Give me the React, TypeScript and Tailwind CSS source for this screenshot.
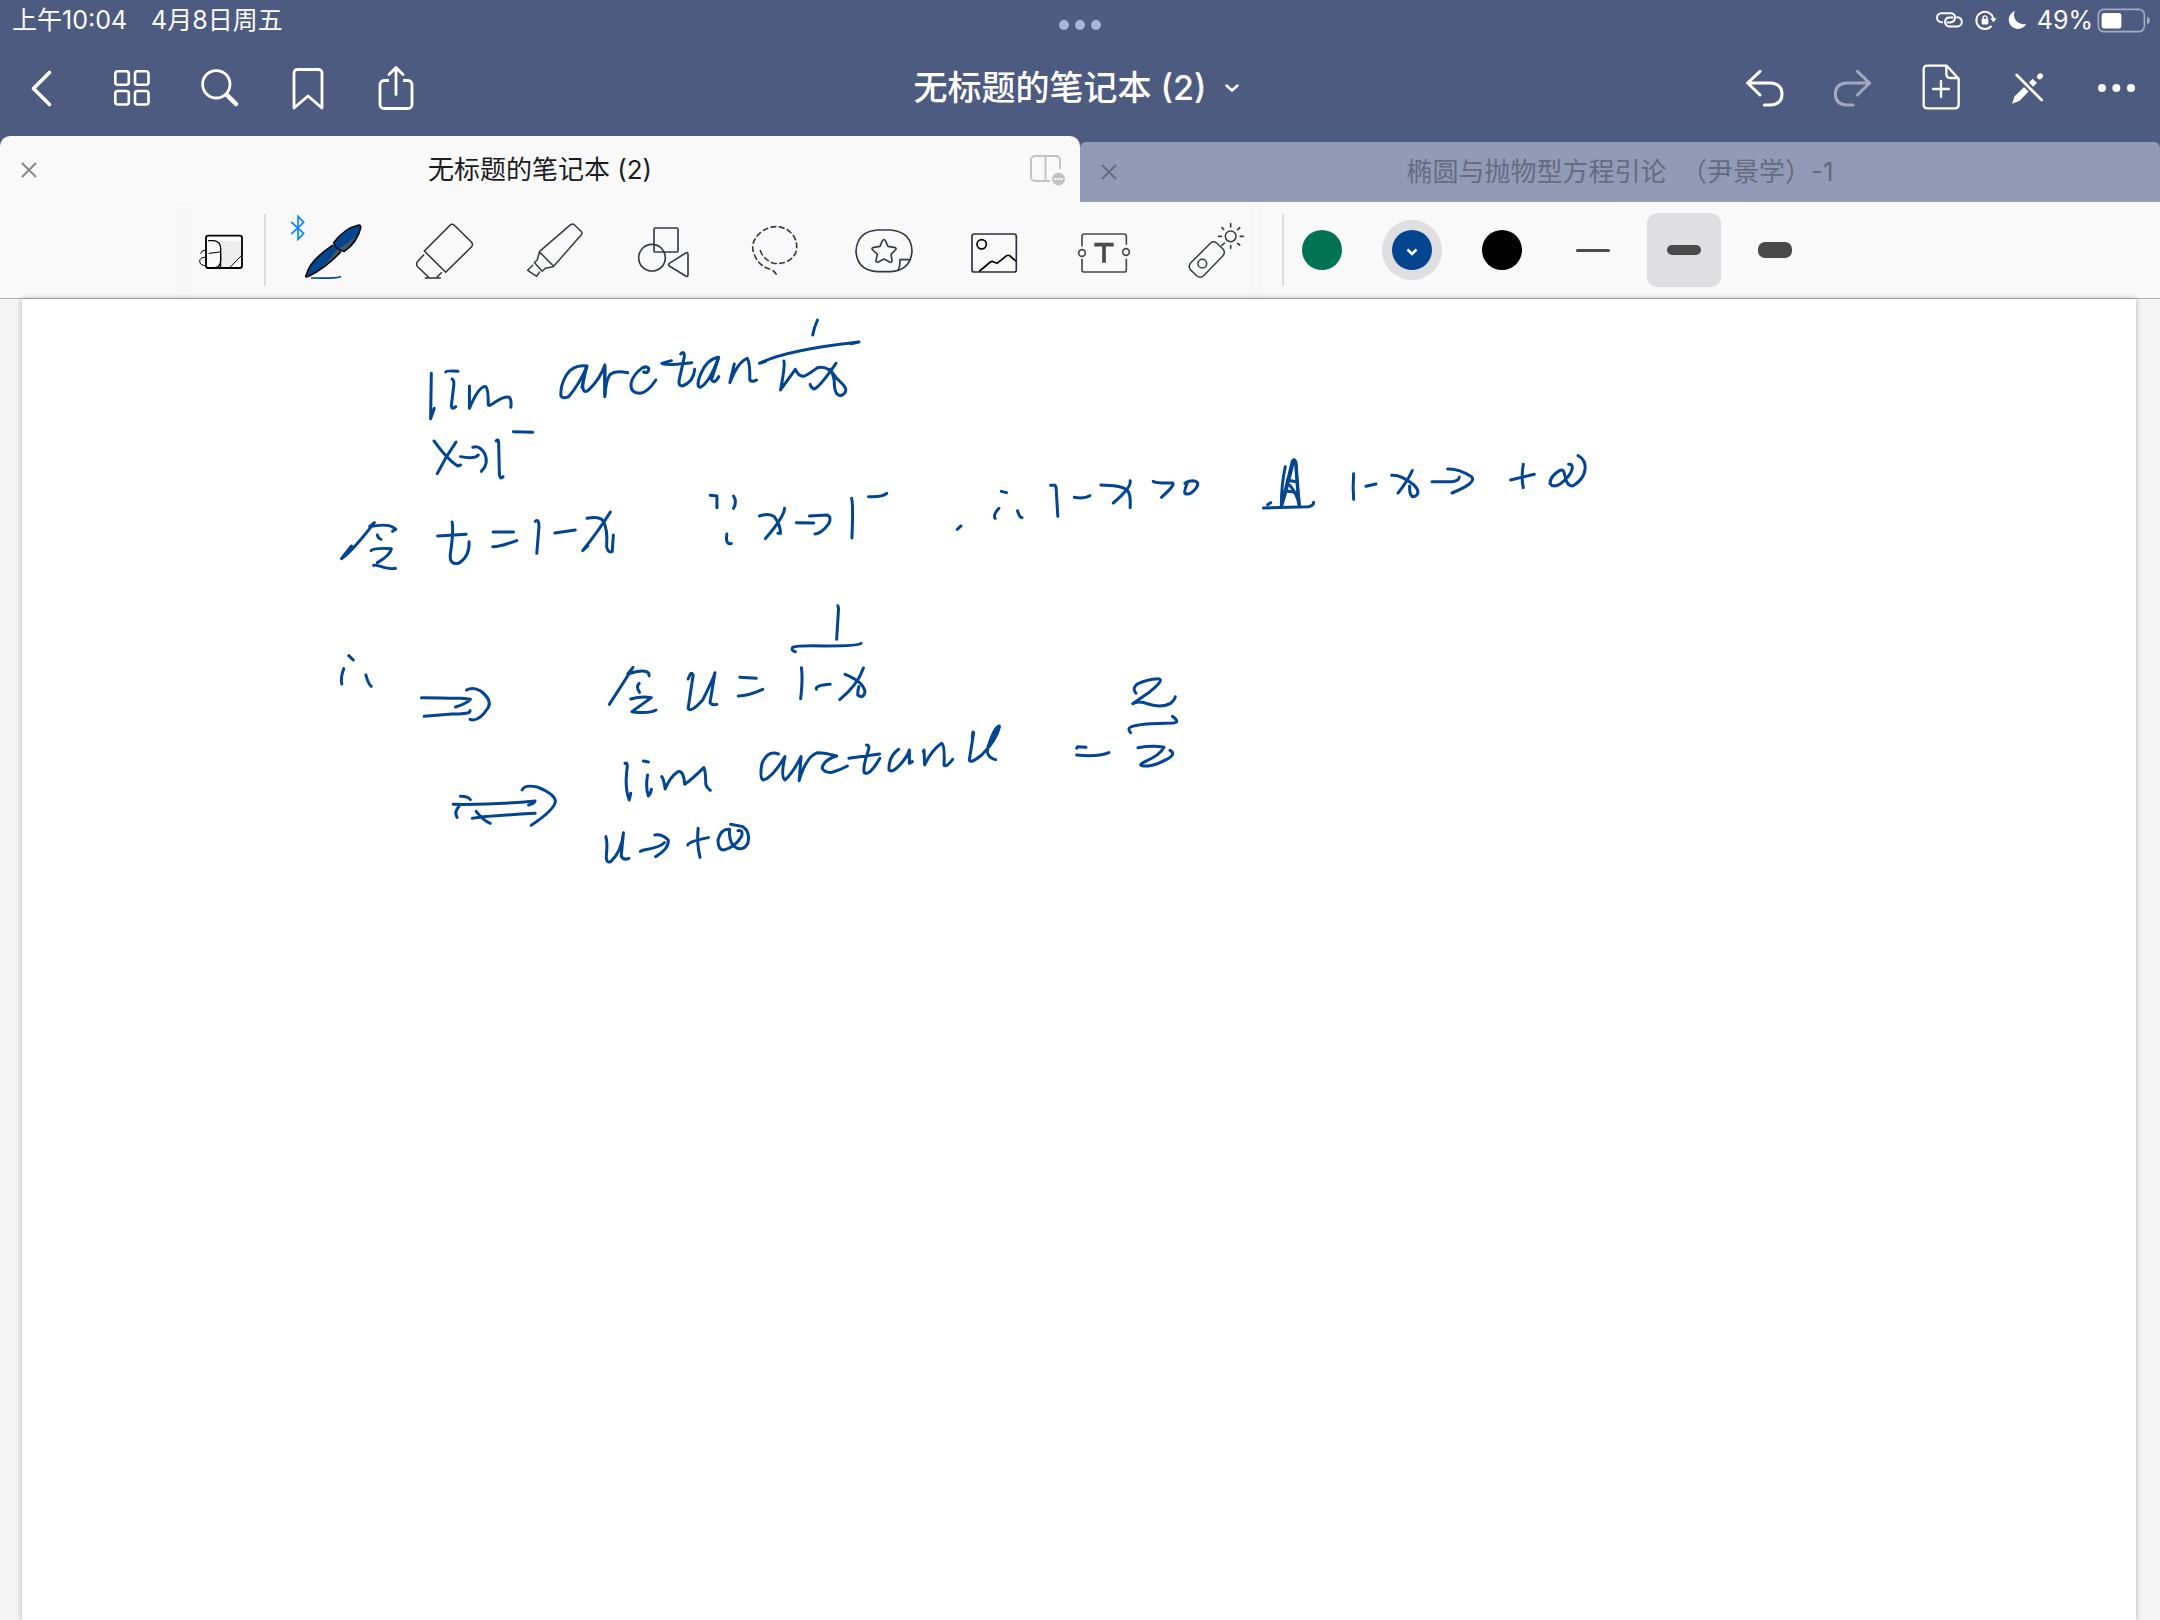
import type { ReactNode } from "react";

const INK = "#03458f";

function NavButton({ label, children }: { label: string; children: ReactNode }) {
  return (
    <button type="button" aria-label={label} className="flex h-22 w-22 items-center justify-center text-white">
      {children}
    </button>
  );
}

function NavIcon({ viewBox = "0 0 44 44", stroke = 3, children }: { viewBox?: string; stroke?: number; children: ReactNode }) {
  return (
    <svg
      viewBox={viewBox}
      className="size-11 overflow-visible"
      fill="none"
      stroke="currentColor"
      strokeWidth={stroke}
      strokeLinecap="round"
      strokeLinejoin="round"
    >
      {children}
    </svg>
  );
}

function Tool({ label, x, stroke = 5, color = "#373b45", children }: { label: string; x: number; stroke?: number; color?: string; children: ReactNode }) {
  return (
    <button type="button" aria-label={label} className="w-[74px] shrink-0">
      <svg
        viewBox={`${x} 42 222 216`}
        className="h-[72px] w-[74px] overflow-visible"
        fill="none"
        stroke={color}
        strokeWidth={stroke}
        strokeLinecap="round"
        strokeLinejoin="round"
      >
        {children}
      </svg>
    </button>
  );
}

function CloseIcon() {
  return (
    <svg viewBox="0 0 16 16" className="size-4" fill="none" stroke="currentColor" strokeWidth="2">
      <path d="M1 1 15 15M15 1 1 15" />
    </svg>
  );
}

function StatusBar() {
  return (
    <div className="grid h-11 grid-cols-[1fr_auto_1fr] items-start text-[25px] leading-10 text-white">
      <div className="flex gap-6 pl-3">
        <span>上午10:04</span>
        <span>4月8日周五</span>
      </div>
      <button type="button" aria-label="多任务" className="flex gap-[6px] pt-5">
        <span className="size-[10px] rounded-full bg-[#a9b4dc]" />
        <span className="size-[10px] rounded-full bg-[#a9b4dc]" />
        <span className="size-[10px] rounded-full bg-[#a9b4dc]" />
      </button>
      <div className="flex h-10 items-center justify-end pr-[9px]">
        <svg viewBox="705 22 96 76" className="h-[25px] w-8" fill="none" stroke="currentColor" strokeWidth="6" strokeLinecap="round">
          <path d="M729 65h-2a13 13 0 0 1 0-27h28a13 13 0 0 1 11 21q-4 7-13 7h-8" />
          <path d="M775 50a14 14 0 0 1 0 28h-24a13 13 0 0 1-13-14q1-13 14-13h9" />
        </svg>
        <svg viewBox="824 22 69 76" className="ml-2 h-[25px] w-[23px]" fill="none" stroke="currentColor" strokeWidth="6">
          <path d="M877 76a26 26 0 1 1 5-22" />
          <path d="M873 53h19l-9 12z" fill="currentColor" stroke="none" />
          <rect x="847" y="55" width="20" height="17" rx="3" fill="currentColor" stroke="none" />
          <path d="M851 57v-5a6 6 0 0 1 12 0v5" strokeWidth="4" />
        </svg>
        <svg viewBox="924 22 60 76" className="ml-[10px] h-[25px] w-5" fill="currentColor">
          <path d="M948 31A28 28 0 1 0 982 70 28 28 0 0 1 948 31z" />
        </svg>
        <span className="ml-[10px]">49%</span>
        <svg viewBox="1190 22 162 76" className="ml-1 h-[25px] w-[54px]" fill="none">
          <rect x="1193" y="26" width="140" height="68" rx="17" stroke="#a2aac0" strokeWidth="5" />
          <rect x="1203" y="37" width="60" height="47" rx="8" fill="#fff" />
          <path d="M1341 48q9 4 9 12t-9 12z" fill="#a2aac0" />
        </svg>
      </div>
    </div>
  );
}

function NavBar() {
  return (
    <nav className="grid h-22 grid-cols-[1fr_auto_1fr] items-center">
      <div className="flex">
        <NavButton label="返回">
          <NavIcon stroke={3.6}>
            <path d="M27.500 6.500 11.500 22.500 27.500 38.500" />
          </NavIcon>
        </NavButton>
        <NavButton label="缩略图">
          <NavIcon stroke={2.6}>
            <rect x="5.300" y="5.300" width="13.500" height="13.500" rx="2.500" />
            <rect x="25" y="5.300" width="13.500" height="13.500" rx="2.500" />
            <rect x="5.300" y="25" width="13.500" height="13.500" rx="2.500" />
            <rect x="25" y="25" width="13.500" height="13.500" rx="2.500" />
          </NavIcon>
        </NavButton>
        <NavButton label="搜索">
          <NavIcon stroke={2.8}>
            <circle cx="18.300" cy="18.300" r="13.700" />
            <path d="M29 29 38 38" strokeWidth="4.500" />
          </NavIcon>
        </NavButton>
        <NavButton label="书签">
          <NavIcon stroke={2.8}>
            <path d="M8 42V7a3.500 3.500 0 0 1 3.500-3.500h21A3.500 3.500 0 0 1 36 7v35L22 30z" />
          </NavIcon>
        </NavButton>
        <NavButton label="分享">
          <NavIcon stroke={2.8}>
            <path d="M15 14.500h-5a4 4 0 0 0-4 4v20a4 4 0 0 0 4 4h24a4 4 0 0 0 4-4v-20a4 4 0 0 0-4-4h-5" strokeLinecap="butt" />
            <path d="M22 2v26.500M15 8.500 22 1.500 29 8.500" />
          </NavIcon>
        </NavButton>
      </div>
      <button type="button" className="flex items-center gap-[18px] pr-2 whitespace-nowrap text-white">
        <h1 className="text-[34px] leading-[44px] font-medium">无标题的笔记本 (2)</h1>
        <svg viewBox="0 0 14 8" className="h-2 w-[14px]" fill="none" stroke="currentColor" strokeWidth="2.500" strokeLinecap="round" strokeLinejoin="round">
          <path d="M1.500 1.500 7 6.500 12.500 1.500" />
        </svg>
      </button>
      <div className="flex justify-end">
        <NavButton label="撤销">
          <NavIcon viewBox="126 198 132 132" stroke={9}>
            <path d="M180 214 143 249 180 285M143 249H211q35 2 35 33t-35 33H193" />
          </NavIcon>
        </NavButton>
        <NavButton label="重做">
          <NavIcon viewBox="390 198 132 132" stroke={9}>
            <g className="text-[#a2aac0]" stroke="currentColor">
              <path d="M472 214 509 249 472 285M509 249H441q-35 2-35 33t35 33H459" />
            </g>
          </NavIcon>
        </NavButton>
        <NavButton label="添加页面">
          <NavIcon viewBox="654 198 132 132" stroke={7}>
            <path d="M681 197h59l36 39v79a10 10 0 0 1-10 10h-85a10 10 0 0 1-10-10V207a10 10 0 0 1 10-10z" />
            <path d="M739 199v24q0 11 11 11h24M723 243v48M699 267h48" />
          </NavIcon>
        </NavButton>
        <NavButton label="只读模式">
          <NavIcon viewBox="918 198 132 132" stroke={8}>
            <path d="M936 311 944 289 998 236 1011 249 958 303z" fill="currentColor" stroke="none" />
            <path d="M1019 230 1021 228" strokeWidth="16" />
            <path d="M955 230 1025 300" stroke="#4d5b80" strokeWidth="20" strokeLinecap="butt" />
            <path d="M950 225 1025 300" />
          </NavIcon>
        </NavButton>
        <NavButton label="更多">
          <NavIcon viewBox="1182 198 132 132">
            <g fill="currentColor" stroke="none">
              <circle cx="1206" cy="264" r="12" />
              <circle cx="1249" cy="264" r="12" />
              <circle cx="1293" cy="264" r="12" />
            </g>
          </NavIcon>
        </NavButton>
      </div>
    </nav>
  );
}

function Tabs() {
  return (
    <div className="mt-1 grid grid-cols-2 items-end text-[26px] leading-8">
      <div className="grid h-[66px] grid-cols-[60px_1fr_60px] items-center rounded-t-[10px] bg-[#f9f9f9] pt-[2px] text-[#1c1c1e]">
        <button type="button" aria-label="关闭标签页" className="flex h-11 items-center pl-[21px] text-[#888]">
          <CloseIcon />
        </button>
        <button type="button" className="truncate text-center">无标题的笔记本 (2)</button>
        <button type="button" aria-label="分屏" className="flex justify-end pr-[14px]">
          <svg viewBox="0 0 36 32" className="h-8 w-9" fill="none" stroke="#c3c3c5" strokeWidth="2">
            <path d="M30 15V6a4 4 0 0 0-4-4H5a4 4 0 0 0-4 4v17a4 4 0 0 0 4 4h15M15.500 2v25" />
            <circle cx="28.500" cy="25" r="6.500" fill="#c3c3c5" stroke="none" />
            <path d="M24.500 25h2M27.500 25h2M30.500 25h2" stroke="#fff" />
          </svg>
        </button>
      </div>
      <div className="grid h-[60px] grid-cols-[60px_1fr_60px] items-center rounded-t-md bg-[#929bb5] text-[#646c80]">
        <button type="button" aria-label="关闭标签页" className="flex h-11 items-center pl-[21px]">
          <CloseIcon />
        </button>
        <button type="button" className="truncate text-center">椭圆与抛物型方程引论{"\u00a0\u00a0"}（尹景学）-1</button>
      </div>
    </div>
  );
}

function Toolbar() {
  return (
    <div role="toolbar" className="flex h-[97px] items-center overflow-hidden border-b border-[#b0b0b0] bg-[#f9f9f9] pl-[176px]">
      <div className="h-full w-4 shrink-0 bg-[#f7f7f7]" />
      <button type="button" aria-label="手势" className="w-[60px] shrink-0">
        <svg viewBox="36 42 180 216" className="h-[72px] w-[60px]" fill="none" stroke="#000" strokeWidth="4" strokeLinecap="round">
          <path d="M121 123h52q11 3 11 14v28L148 203H121z" fill="#ededee" stroke="none" />
          <rect x="78" y="107" width="108" height="97" rx="7" strokeWidth="5.500" />
          <path d="M86 122h16q20 3 20 24v35q0 22-18 22H82" />
          <path d="M87 160 120 156M122 160v42M77 150q-13 0-15 10M77 172q-18-1-18 12 0 12 18 13M150 202 184 167" strokeWidth="3" />
        </svg>
      </button>
      <div className="ml-3 h-[72px] w-[2px] shrink-0 bg-[#dcdcdd]" />

      <div className="ml-[31px] flex shrink-0 gap-9">
        <Tool label="钢笔" x={351}>
          <path d="M335 67 371 100 354 118V49L371 67 335 101" stroke="#0a84ff" strokeWidth="5" strokeLinejoin="miter" />
          <path d="M376 231q9-44 84-97l24 19q-44 45-95 76z" fill={INK} stroke="none" />
          <path d="M400 222Q455 190 482 154L472 147Q446 186 400 222z" fill="#4a5566" stroke="none" />
          <path d="M461 128q34-44 75-53 7 0 6 9-11 44-49 70-15 0-32-26z" fill={INK} stroke="none" />
          <path d="M477 147Q502 128 526 110 512 138 493 153z" fill="#4a5566" stroke="none" />
          <path d="M457 136q-67 46-76 84l-4 10q1 2 9-1 50-25 95-72M461 128q34-44 75-53 7 0 6 9-11 44-49 70-24-4-32-26z" stroke="#0b0b0b" />
          <path d="M395 234q68 2 86-4" stroke={INK} />
        </Tool>
        <Tool label="橡皮擦" x={681} color="#2f3033" stroke={4.5}>
          <path d="M733 153 810 76q6-7 13 0l51 50q6 6 1 14L797 217zM731 165l-17 18q-8 8-1 17l32 31M736 234h45M772 230l12-12" />
        </Tool>
        <Tool label="荧光笔" x={1011} stroke={4.5}>
          <path d="M1078 155 1172 74q6-4 11 0l20 20q5 5 1 10L1121 199zM1078 157l-6 22-9 9M1119 200l-23 5-9 9-22-24M1058 196l-15 15 27 18 9-13" />
        </Tool>
        <Tool label="形状" x={141}>
          <rect x="222" y="84" width="72" height="72" rx="4" />
          <circle cx="216" cy="173" r="40" />
          <path d="M268 190 317 159q7-4 7 4v61q0 8-7 4L268 198q-4-4 0-8z" />
        </Tool>
        <Tool label="套索" x={471}>
          <path d="M541 152q10 27 40 38 46 5 66-31 12-43-24-69-39-23-80 6-38 34-18 72 12 30 47 40 17 8 20 24" strokeDasharray="14 11" />
        </Tool>
        <Tool label="元素" x={801}>
          <path d="M892 90h40q62 6 64 63-4 58-64 62h-40q-61-4-64-62 4-58 64-63z" />
          <path d="M991 179h-31q0 20-5 32" />
          <path d="M907 122q5-7 9 0l8 17 18 3q10 2 4 8l-13 13 3 18q0 8-7 5l-17-9-17 9q-8 2-7-5l4-18-14-13q-5-7 4-8l18-3z" />
        </Tool>
        <Tool label="图片" x={111}>
          <rect x="156" y="102" width="133" height="114" rx="7" stroke="#2d2f3a" />
          <path d="M179 213 211 186q5-4 10 0l10 4 29-23q5-3 10 1l16 14" stroke="#000" />
          <circle cx="185" cy="133" r="14" stroke="#000" />
        </Tool>
        <Tool label="文本" x={441} color="#4a4a4a">
          <path d="M486 138v-29q0-7 7-7h119q7 0 7 7v24M486 178v31q0 7 7 7h119q7 0 7-7v-31" />
          <circle cx="486" cy="159" r="10" />
          <circle cx="618" cy="156" r="10" />
          <path d="M523 134h58M552 134v54" strokeWidth="11" strokeLinecap="butt" />
        </Tool>
        <Tool label="激光笔" x={771} stroke={4.5}>
          <path d="M811 190 872 129q9-7 18 0l19 18q8 10 0 20L850 228q-9 7-19 0l-20-19q-7-9 0-19zM905 136l9-7" />
          <circle cx="847" cy="191" r="13" />
          <circle cx="932" cy="109" r="16" />
          <path d="M932 71v10M932 137v8M895 109h9M961 109h9M906 83l5 5M953 89l6-6M953 130l6 5" strokeWidth="5" />
        </Tool>
      </div>

      <div className="h-full w-[10px] shrink-0 bg-[#f7f7f7]" />
      <div className="ml-[21px] h-[72px] w-[2px] shrink-0 bg-[#dcdcdd]" />

      <div className="ml-2 flex shrink-0 gap-[30px]">
        <button type="button" aria-label="绿色" className="flex size-[60px] items-center justify-center">
          <span className="size-10 rounded-full bg-[#007354]" />
        </button>
        <button type="button" aria-label="蓝色" aria-pressed="true" className="flex size-[60px] items-center justify-center rounded-full bg-[#dfdfe1]">
          <span className="flex size-10 items-center justify-center rounded-full bg-[#03458f]">
            <svg viewBox="0 0 12 8" className="mt-1 h-2 w-3" fill="none" stroke="#fff" strokeWidth="2.500">
              <path d="M1.500 1.500 6 6 10.500 1.500" />
            </svg>
          </span>
        </button>
        <button type="button" aria-label="黑色" className="flex size-[60px] items-center justify-center">
          <span className="size-10 rounded-full bg-black" />
        </button>
      </div>

      <div className="ml-6 flex shrink-0 gap-[17px]">
        <button type="button" aria-label="细" className="flex size-[74px] items-center justify-center">
          <span className="h-[3px] w-[34px] rounded-full bg-[#4a4a4a]" />
        </button>
        <button type="button" aria-label="中" aria-pressed="true" className="flex size-[74px] items-center justify-center rounded-[10px] bg-[#dfdfe1]">
          <span className="h-[10px] w-[34px] rounded-full bg-[#4a4a4a]" />
        </button>
        <button type="button" aria-label="粗" className="flex size-[74px] items-center justify-center">
          <span className="h-4 w-[34px] rounded-[7px] bg-[#4a4a4a]" />
        </button>
      </div>
    </div>
  );
}

/* Pen strokes, grouped by the region of the page they were written in. */
const inkGroups = [
  {
    transform: "translate(320 300) scale(.3699 .3333)",
    strokes: [
      "M301 220 299 356 309 325",
      "M357 237Q364 240 361 262L355 318Q357 330 367 320",
      "M340 216Q342 211 373 214",
      "M404 258 404 325Q430 257 448 260 455 265 455 315 458 320 475 305 500 288 512 292 518 298 516 322",
      "M722 198Q685 192 666 225 650 255 651 287 655 298 672 290 700 255 722 198 706 250 712 270 717 280 728 268 758 235 770 195L770 290Q773 240 784 224 797 210 832 218",
      "M720 200 714 235 708 262M770 200V285",
      "M875 216Q888 222 889 206 885 197 872 203 845 225 841 250 838 280 865 280 885 278 908 240",
      "M950 182 924 190Q930 198 1005 188",
      "M975 162Q985 150 985 170L971 240Q968 258 980 258 1010 245 1013 208",
      "M1075 172Q1045 180 1030 220 1015 260 1028 262 1052 250 1078 172L1058 238Q1065 255 1078 230",
      "M1077 173 1060 232",
      "M1120 192 1108 248Q1130 185 1155 175 1163 190 1162 240 1168 248 1180 240",
      "M1205 184 1188 190Q1260 150 1457 126L1435 131",
      "M1345 60Q1335 85 1332 105",
      "M1254 183Q1258 195 1245 270L1285 208Q1295 232 1310 228 1325 220 1345 203 1370 198 1385 220 1392 240 1391 262 1395 290 1410 286 1430 275 1415 255 1395 235 1378 208",
      "M1395 190Q1350 262 1336 267 1328 265 1325 253",
      "M308 423Q345 480 372 498L380 495",
      "M368 426Q340 470 317 521",
      "M380 470Q418 478 428 465",
      "M413 442Q430 435 445 460 458 490 436 514",
      "M476 423Q483 415 483 430L485 525Q488 540 495 530",
      "M523 395 575 397",
      "M85 738 58 776Q85 757 147 668L134 680Q180 670 197 682L205 688 196 694",
      "M155 705Q157 715 165 718",
      "M138 752Q145 743 193 746 190 765 155 788",
      "M145 796Q150 793 175 803 195 808 204 805",
      "M318 708 395 703",
      "M357 666Q362 690 352 765 350 795 375 790 405 770 403 725",
      "M468 696H523M467 740Q480 742 532 722",
      "M582 664Q592 655 592 680L586 760",
      "M635 699 690 690",
      "M722 655Q755 648 765 662 778 685 775 740 778 760 790 755L793 705",
      "M785 636Q755 690 710 752L724 738",
      "M1055 586 1073 588 1073 623M1118 588Q1128 605 1118 625M1100 702Q1095 735 1112 731",
      "M1188 648Q1215 638 1228 650 1245 675 1245 700L1238 700M1256 625Q1255 650 1204 716",
      "M1288 668 1335 669M1323 648 1370 645Q1385 650 1375 672 1355 702 1338 702",
      "M1437 595Q1442 610 1438 714M1483 590Q1520 592 1532 580",
    ],
  },
  {
    transform: "translate(680 440) scale(.3444 .3333)",
    strokes: [
      "M805 268 816 258",
      "M933 154 948 158M926 205Q908 225 915 235M980 212Q985 232 993 233",
      "M1076 136 1089 136 1092 142 1097 229M1145 172Q1175 177 1190 167",
      "M1222 135Q1280 136 1295 148 1310 156 1307 203M1307 122Q1312 142 1258 189",
      "M1374 124Q1380 130 1430 129 1440 133 1398 172",
      "M1473 128Q1463 155 1466 160 1480 168 1498 145 1512 125 1490 122 1475 122 1466 130",
    ],
  },
  {
    transform: "translate(1200 431) scale(.3333)",
    strokes: [
      "M190 231 325 227Q340 225 341 214M203 221 212 215",
      "M256 107Q244 160 244 225L277 90Q284 80 288 95L298 225Q292 190 270 163",
      "M246 222Q262 170 281 88M287 95Q290 160 298 223M262 148 290 152M258 180 287 184",
      "M461 128Q458 170 461 205M498 166 528 159",
      "M575 133Q600 130 640 160 665 185 645 196 628 202 629 165M637 119Q620 155 594 186",
      "M696 152H755Q778 150 778 138M743 114Q775 112 815 137 832 155 756 186",
      "M932 147 1003 130M970 100Q963 140 970 170",
      "M1106 100Q1118 98 1117 112 1112 135 1082 158 1060 172 1050 158 1050 135 1080 118 1092 112 1095 135 1100 165 1118 165 1160 140 1155 100 1150 82 1134 74",
    ],
  },
  {
    transform: "translate(320 590) scale(.3827 .3333)",
    strokes: [
      "M75 197 87 210M62 236Q53 265 57 282M120 255Q125 280 134 289",
      "M265 323Q310 323 370 325L393 328Q385 340 354 351M272 379 345 372Q395 373 392 362",
      "M383 300Q400 290 420 303 450 330 440 352 415 398 392 388",
      "M756 343Q795 275 818 232L804 252Q850 235 859 250L860 257",
      "M834 280Q825 290 835 307M812 327Q840 318 866 323L815 365Q860 372 878 360",
      "M962 267Q970 240 975 255L962 355Q968 370 1000 330 1030 260 1032 248L1019 338Q1025 347 1037 343",
      "M1097 262 1140 265M1093 318Q1120 317 1157 298",
      "M1353 47 1355 55 1350 148M1242 185Q1230 182 1235 172 1245 166 1320 168 1410 168 1414 160",
      "M1258 233Q1262 270 1256 326M1297 298Q1293 286 1333 283",
      "M1372 253Q1420 275 1424 305 1420 328 1405 315 1405 300 1408 290M1420 234Q1405 285 1358 329",
      "M797 520Q803 515 803 530 795 590 808 630L812 610M856 555Q850 590 858 618 865 610 866 598M845 513 858 516",
      "M893 560Q898 565 902 597 915 560 935 545 950 540 953 583 970 570 1003 533 1008 545 1008 583 1010 592 1020 601",
      "M1198 492Q1170 480 1155 520 1148 565 1158 570 1180 565 1215 500 1203 560 1215 570 1235 550 1257 500L1252 572Q1270 500 1300 488 1320 488 1350 498 1315 510 1312 535 1320 550 1338 547 1360 540 1378 528",
      "M1382 505 1462 492M1428 465Q1437 465 1433 480 1418 530 1422 548 1435 560 1463 505",
      "M1512 478Q1485 500 1487 540 1495 550 1515 525 1535 500 1540 480L1540 520 1548 515",
      "M348 643Q450 645 562 633 560 642 545 645M398 685Q430 678 562 670",
      "M367 619Q385 618 393 629M363 650Q350 665 358 682M408 664Q425 690 445 700",
      "M528 600Q535 582 570 592 615 613 615 635 612 660 552 706",
      "M747 740Q752 760 748 800 748 820 760 815 788 785 793 728L787 798Q793 812 807 805",
      "M837 784 843 781Q890 772 900 758M875 735Q895 732 910 750 913 775 877 800",
      "M961 765Q960 755 1015 743M988 715Q984 760 993 802",
      "M1092 722Q1106 718 1102 738 1085 772 1055 780 1040 780 1040 750 1048 715 1070 718 1068 748 1080 768 1105 788 1118 760 1125 725 1105 710L1073 703",
    ],
  },
  {
    transform: "translate(900 640) scale(.3333)",
    strokes: [
      "M70 335 72 330 74 375Q95 330 125 310 135 315 132 376 140 382 158 358",
      "M217 296Q218 270 221 278L208 360Q212 372 245 345 290 300 298 258 285 258 268 310 250 350 287 359",
      "M296 262Q275 285 270 310M298 262Q290 290 268 318",
      "M530 325 533 320 558 322M530 345Q590 352 627 338",
      "M708 160Q695 145 712 132 740 118 775 116 795 118 750 155L698 191Q715 180 745 192 785 205 812 190 825 178 826 170",
      "M692 278Q680 265 695 260 720 250 820 249 842 247 817 229",
      "M714 323Q760 315 792 322 780 345 735 365 705 380 745 378 770 375 800 358 830 342 810 331",
    ],
  },
];

function Page() {
  return (
    <main className="flex flex-1 bg-[#f5f5f5] pr-6 pl-[22px]">
      <div className="min-w-0 flex-1 overflow-hidden bg-white shadow-[0_0_6px_rgba(0,0,0,0.3)]">
        <svg
          role="img"
          aria-label="手写笔记：极限计算"
          viewBox="22 299 1700 620"
          className="h-[620px] w-[1700px] max-w-none"
          fill="none"
          stroke={INK}
          strokeWidth="3"
          strokeLinecap="round"
          strokeLinejoin="round"
        >
          {inkGroups.map((group) => (
            <g key={group.transform} transform={group.transform}>
              {group.strokes.map((d) => (
                <path key={d} d={d} vectorEffect="non-scaling-stroke" />
              ))}
            </g>
          ))}
        </svg>
      </div>
    </main>
  );
}

export default function App() {
  return (
    <div className="flex min-h-screen flex-col bg-white font-['Inter','Noto_Sans_CJK_SC',sans-serif]">
      <header className="bg-[#4d5b80]">
        <StatusBar />
        <NavBar />
        <Tabs />
      </header>
      <Toolbar />
      <Page />
    </div>
  );
}
